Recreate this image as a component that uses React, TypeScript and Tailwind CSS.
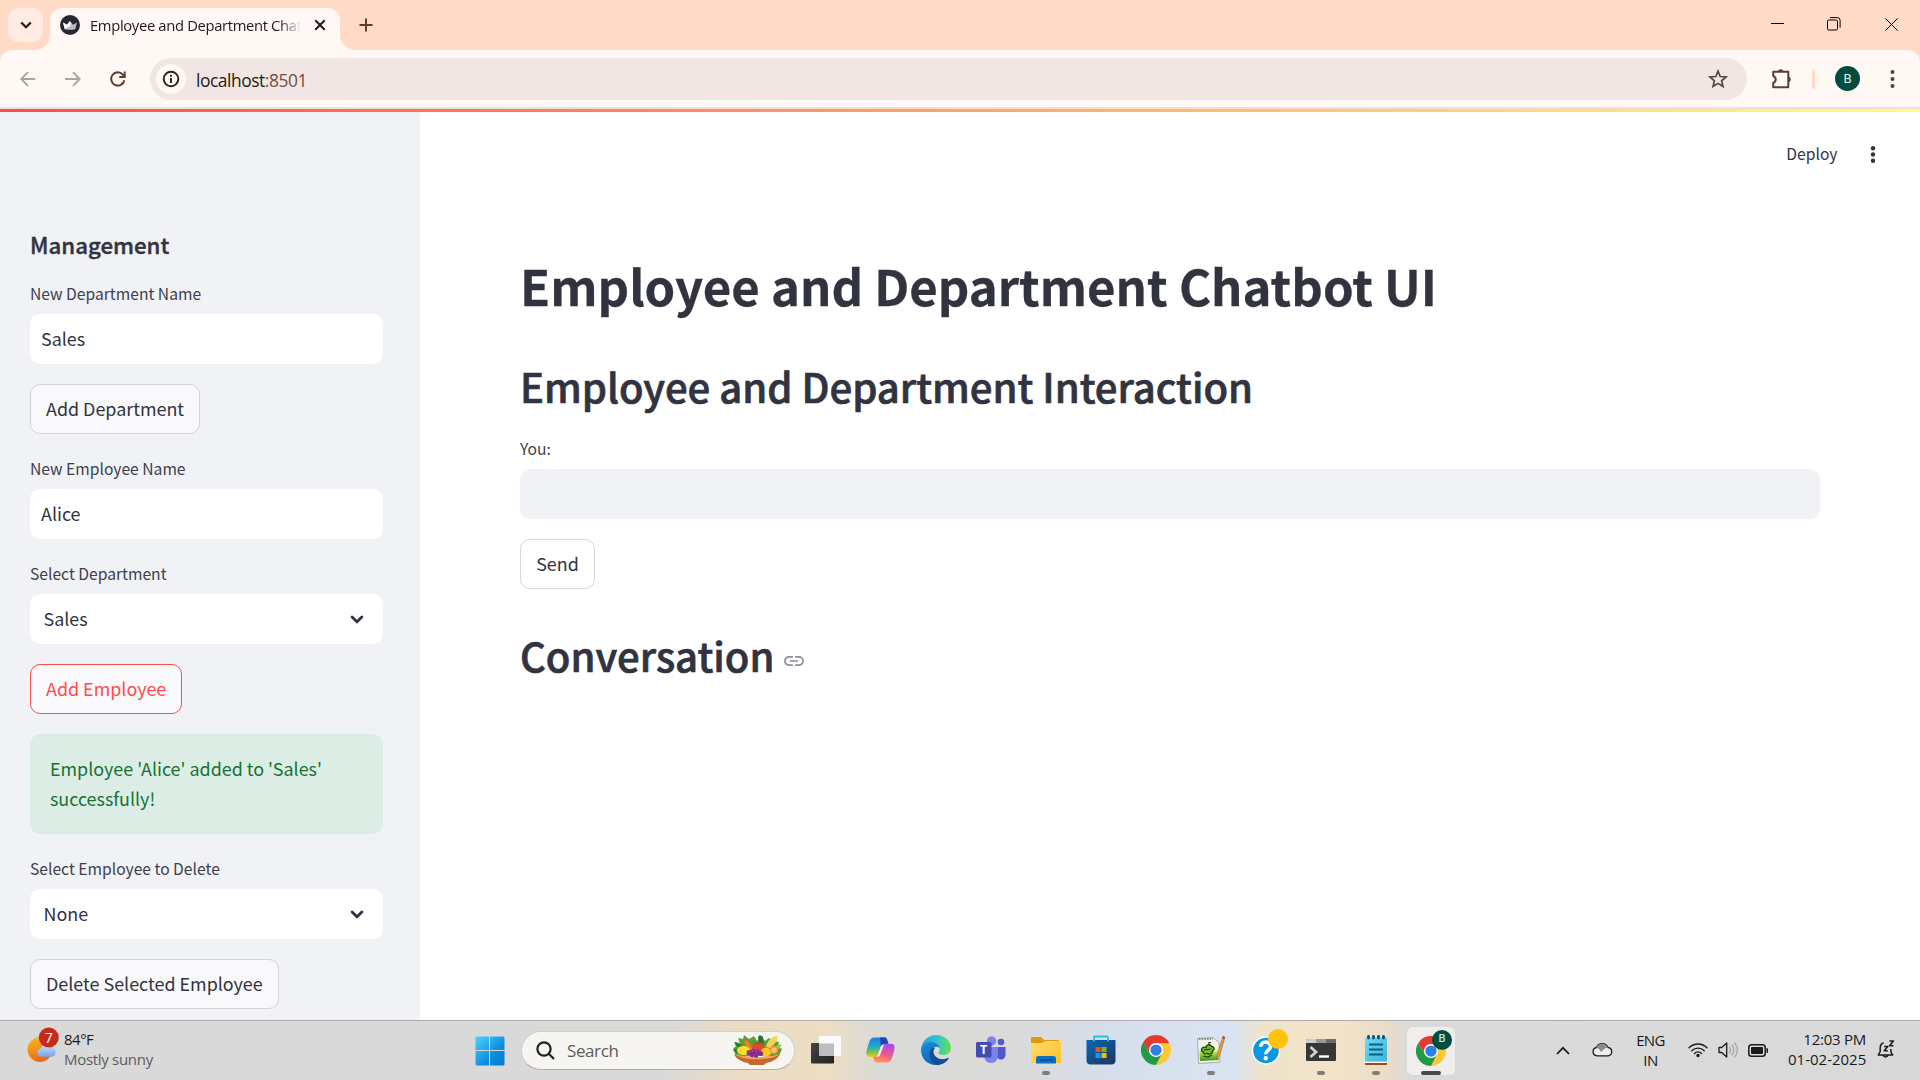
import React from "react";

const UI = "font-['Open_Sans','Noto_Sans',sans-serif]";
const APP = "font-['Noto_Sans_CJK_SC','Noto_Sans',sans-serif]";

function Crown() {
  return (
    <svg width="20" height="20" viewBox="0 0 20 20" className="shrink-0">
      <circle cx="10" cy="10" r="10" fill="#262730" />
      <path d="M3 7.500l4 2.200L10 6l3 3.700 4-2.200-1.800 6.800c-3 .7-7 .7-10.400 0z" fill="#b9bcc2" />
      <path d="M3 7.500l4 2.200L10 6l.8 4.500-6 3.800z" fill="#fff" />
    </svg>
  );
}

function TabStrip() {
  return (
    <header className="flex h-[50px] shrink-0 items-start bg-[#ffdac6] pl-2 text-[#1f1a17]">
      <div className="mt-2 flex h-[34px] w-[35px] items-center justify-center rounded-[11px] bg-[#ffebe2]">
        <svg width="12" height="8" viewBox="0 0 12 8" fill="none" stroke="#1f1a17" strokeWidth="2.2">
          <path d="M1.2 1.5L6 6.2l4.8-4.7" />
        </svg>
      </div>
      <div className="relative ml-[7px] mt-2 flex h-[42px] w-[290px] items-start rounded-t-[12px] bg-[#fff8f5] pl-[10px]">
        <svg className="absolute bottom-0 -left-[15px]" width="15" height="15">
          <path d="M15 0v15H0A15 15 0 0 0 15 0z" fill="#fff8f5" />
        </svg>
        <svg className="absolute bottom-0 -right-[15px]" width="15" height="15">
          <path d="M0 0v15h15A15 15 0 0 1 0 0z" fill="#fff8f5" />
        </svg>
        <div className="mt-[7px] flex h-5 items-center">
          <Crown />
          <div className="ml-[10px] w-[212px] overflow-hidden whitespace-nowrap text-[14.8px] leading-5 tracking-[-0.35px] [mask-image:linear-gradient(to_right,black_190px,transparent_211px)]">
            Employee and Department Chatbot
          </div>
          <svg width="12" height="12" viewBox="0 0 12 12" className="ml-3" stroke="#1f1a17" strokeWidth="2">
            <path d="M1.3 1.3l9.4 9.4M10.7 1.3L1.3 10.7" />
          </svg>
        </div>
      </div>
      <svg width="14" height="14" viewBox="0 0 14 14" className="ml-[19px] mt-[18px]" stroke="#5b3f30" strokeWidth="2">
        <path d="M7 .5v13M.5 7h13" />
      </svg>
      <div className="ml-auto flex h-[48px] items-center pr-[22px] text-black">
        <svg width="13" height="13" viewBox="0 0 13 13" stroke="#000" fill="none">
          <path d="M0 5.500h13" />
        </svg>
        <svg width="14" height="14" viewBox="0 0 14 14" stroke="#000" fill="none" className="ml-[43px]">
          <rect x=".5" y="3" width="10" height="10" rx="1.2" />
          <path d="M3 .6h7.5a2.6 2.6 0 0 1 2.6 2.6v7.5" />
        </svg>
        <svg width="13" height="13" viewBox="0 0 13 13" stroke="#000" className="ml-[44px]" fill="none">
          <path d="M.4.4l12.2 12.2M12.6.4L.4 12.6" />
        </svg>
      </div>
    </header>
  );
}

function Toolbar() {
  return (
    <div className="shrink-0 bg-[#ffdac6]">
      <div className="flex h-[57px] items-center rounded-t-[12px] bg-[#fff8f5] pl-5">
        <svg width="16" height="16" viewBox="0 0 16 16" fill="none" stroke="#b1a29d" strokeWidth="1.9">
          <path d="M15.3 8H1.5M8 1.2L1.3 8 8 14.8" />
        </svg>
        <svg width="16" height="16" viewBox="0 0 16 16" fill="none" stroke="#b1a29d" strokeWidth="1.9" className="ml-[29px]">
          <path d="M0 8h14M8 1.2L14.7 8 8 14.8" />
        </svg>
        <svg width="16" height="16" viewBox="0 0 16 16" fill="none" stroke="#5b3f30" strokeWidth="2" className="ml-[29px]">
          <path d="M14.3 9.2A6.6 6.6 0 1 1 12.8 3.6L14.6 5.6" />
          <path d="M14.7.5V6H9.2" />
        </svg>
        <div className="ml-[24px] flex h-[42px] w-[1597px] items-center rounded-full bg-[#f1e6e3] pl-[6px]">
          <div className="flex size-[30px] items-center justify-center rounded-full bg-[#fff8f5]">
            <svg width="18" height="18" viewBox="0 0 18 18" fill="none" stroke="#2b211d" strokeWidth="1.9">
              <circle cx="9" cy="9" r="7.3" />
              <path d="M9 8v5M9 4.8v2" />
            </svg>
          </div>
          <div className="ml-[10px] mt-0.5 text-[17.4px] leading-6 tracking-[-0.45px] text-[#1f1a17]">
            localhost<span className="text-[#6b4f43]">:8501</span>
          </div>
          <svg width="20" height="20" viewBox="0 0 20 20" fill="none" stroke="#55453f" strokeWidth="1.7" className="ml-auto mr-[19px]">
            <path d="M10 2.2l2.2 5.3 5.8.5-4.4 3.8 1.4 5.7-5-3.1-5 3.1 1.4-5.7L2 8l5.8-.5z" />
          </svg>
        </div>
        <svg width="22" height="22" viewBox="0 0 22 22" className="ml-[24px]">
          <path d="M2.2 3.7h15.1v15.6H2.2v-4.3a3.7 3.7 0 0 0 0-7z" fill="none" stroke="#5b3f30" strokeWidth="2" strokeLinejoin="round" />
          <path d="M7 3a2.8 2.4 0 0 1 5.400 0zM18 8.700a2.400 2.800 0 0 1 0 5.400z" fill="#5b3f30" />
        </svg>
        <div className="ml-[19px] h-5 w-[3px] rounded bg-[#ffdac6]" />
        <div className="ml-[20px] flex size-[25px] items-center justify-center rounded-full bg-[#004d40] font-['Roboto',sans-serif] text-[13px] text-[#e5f0ee]">
          B
        </div>
        <svg width="5" height="20" viewBox="0 0 5 20" fill="#5b3f30" className="ml-[30px]">
          <circle cx="2.500" cy="3" r="2" />
          <circle cx="2.500" cy="10" r="2" />
          <circle cx="2.500" cy="17" r="2" />
        </svg>
      </div>
      <div className="h-[2px] bg-[#eedfda]" />
    </div>
  );
}

function Label({ children }: { children: React.ReactNode }) {
  return <div className="mb-[6px] h-[29px] whitespace-nowrap pt-px text-[15.65px] leading-7 text-[#3d3f4b]">{children}</div>;
}

function Select({ value }: { value: string }) {
  return (
    <div className="flex h-[50px] items-center justify-between rounded-[10px] bg-white pl-[13.5px] pr-[19px] text-[17.9px]">
      <span className="-mt-0.5">{value}</span>
      <svg width="14" height="9" viewBox="0 0 14 9" fill="none" stroke="#31333f" strokeWidth="2.800" strokeLinecap="round">
        <path d="M2.100 2L7 6.700 11.900 2" />
      </svg>
    </div>
  );
}

function TextInput({ value }: { value: string }) {
  return (
    <div className="mb-5 flex h-[50px] items-center rounded-[10px] bg-white pb-0.5 pl-[11px] text-[17.9px]">{value}</div>
  );
}

function Button({ children, active }: { children: React.ReactNode; active?: boolean }) {
  return (
    <button
      className={
        "flex h-[50px] items-center justify-center self-start whitespace-nowrap rounded-[10px] border px-[15px] pb-0.5 text-[17.92px] " +
        (active ? "border-[#ff4b4b] bg-[#f9f9fb] text-[#ff4b4b]" : "border-[#d3d4d8] bg-[#f9f9fb]")
      }
    >
      {children}
    </button>
  );
}

function Sidebar() {
  return (
    <aside className="flex w-[420px] shrink-0 flex-col bg-[#f0f2f6] pl-[30px] pr-[37px] pt-[116px]">
      <h2 className="mb-[20px] h-[31px] pt-px text-[22.25px] font-medium leading-[30px] [-webkit-text-stroke:0.4px_#31333f]">
        Management
      </h2>
      <Label>New Department Name</Label>
      <TextInput value="Sales" />
      <Button>Add Department</Button>
      <div className="mt-5">
        <Label>New Employee Name</Label>
      </div>
      <TextInput value="Alice" />
      <Label>Select Department</Label>
      <Select value="Sales" />
      <div className="my-5 flex">
        <Button active>Add Employee</Button>
      </div>
      <div className="mb-5 h-[100px] rounded-[10px] bg-[#dcede6] px-5 pt-[19px] text-[17.9px] leading-[30px] text-[#177233]">
        Employee 'Alice' added to 'Sales' successfully!
      </div>
      <Label>Select Employee to Delete</Label>
      <Select value="None" />
      <div className="mt-5 flex">
        <Button>Delete Selected Employee</Button>
      </div>
    </aside>
  );
}

function Main() {
  return (
    <main className="flex flex-1 flex-col bg-white">
      <div className="flex h-[86px] shrink-0 items-center justify-end pr-[42.5px]">
        <span className="mb-0.5 text-[15.65px]">Deploy</span>
        <svg width="10" height="20" viewBox="0 0 10 20" fill="#31333f" className="ml-[30px]">
          <circle cx="5" cy="3.300" r="2.200" />
          <circle cx="5" cy="9.500" r="2.200" />
          <circle cx="5" cy="15.700" r="2.200" />
        </svg>
      </div>
      <div className="flex flex-col pl-[100px] pr-[100px] pt-[53px]">
        <h1 className="h-[67px] whitespace-nowrap text-[49.1px] font-bold leading-[68px] [-webkit-text-stroke:0.3px_#31333f]">
          Employee and Department Chatbot UI
        </h1>
        <h2 className="mt-[41px] h-[54px] whitespace-nowrap text-[40.05px] font-medium leading-[54px] [-webkit-text-stroke:0.7px_#31333f]">
          Employee and Department Interaction
        </h2>
        <div className="mt-[21px]">
          <Label>You:</Label>
        </div>
        <div className="h-[50px] rounded-[10px] bg-[#f0f2f6]" />
        <button className="mt-5 h-[50px] w-[75px] rounded-[10px] border border-[#d6d6d9] pb-0.5 text-[17.9px]">Send</button>
        <div className="mt-[39px] flex h-[54px] items-center">
          <h2 className="whitespace-nowrap text-[40.05px] font-medium leading-[54px] [-webkit-text-stroke:0.7px_#31333f]">
            Conversation
          </h2>
          <svg width="20" height="10" viewBox="0 0 20 10" fill="none" stroke="#8b8c94" strokeWidth="1.700" strokeLinecap="round" className="ml-[10px] mt-[11px]">
            <path d="M8.200.9H5a4.100 4.100 0 0 0 0 8.200h3.200M11.800.9H15a4.100 4.100 0 0 1 0 8.200h-3.200M6.500 5h7" />
          </svg>
        </div>
      </div>
    </main>
  );
}

function Weather() {
  return (
    <div className="flex w-[459px] items-start pl-[26px]">
      <svg width="36" height="38" viewBox="0 0 36 38" className="mt-[5px]">
        <defs>
          <linearGradient id="sun" x1="0" y1="0" x2="0.3" y2="1">
            <stop offset="0" stopColor="#f5bd2f" />
            <stop offset="1" stopColor="#ef6a0d" />
          </linearGradient>
          <linearGradient id="cl" x1="0" y1="0" x2="0" y2="1">
            <stop offset="0" stopColor="#c4defb" />
            <stop offset="1" stopColor="#7da3ea" />
          </linearGradient>
        </defs>
        <circle cx="14" cy="23.500" r="12.500" fill="url(#sun)" />
        <path d="M15 30.700a4 4 0 0 1-.5-7.900 6.500 6.500 0 0 1 11.500-.8 4.500 4.500 0 0 1 .5 8.700z" fill="url(#cl)" />
        <circle cx="22.800" cy="11.500" r="10" fill="#c42b1c" />
        <text x="22.800" y="16.500" textAnchor="middle" fontSize="14" fill="#fff" fontFamily="Open Sans">7</text>
      </svg>
      <div className="ml-[2px] mt-[8px] text-[15px] leading-5 tracking-[-0.3px] text-[#1a1a1a]">
        <div className="tracking-[-0.5px]">84°F</div>
        <div className="text-[#5c5c5c]">Mostly sunny</div>
      </div>
    </div>
  );
}

function Basket() {
  return (
    <svg width="50" height="32" viewBox="0 0 50 32">
      <path d="M1 15l3-3-2-4 6 1-2-5 5 1 1-4 5 4 5-3 3 5 5-4 3 4 4-3 4 3 6 1-1 5 4 2-3 7H4z" fill="#5a9f3c" />
      <path d="M1 15l6 0 3 5-6-1zM3 8l7 3-1 3-5-2z" fill="#2f7a2b" />
      <path d="M12 8c0-2 3-3 4-1l5 8-4 2z" fill="#f47b20" />
      <path d="M34 13c1-5 5-11 11-11 2 3-3 9-7 12z" fill="#f4d35a" />
      <path d="M39 14l10-4c1 3-3 6-8 7z" fill="#a8bf4b" />
      <path d="M26 3c1-2 5-2 5 1l1 7-5 1z" fill="#2f6f2a" />
      <ellipse cx="26" cy="13" rx="6.300" ry="5" fill="#dd4a34" />
      <path d="M26 8l-4 1.500 4 .8 4-.8z" fill="#3d8a30" />
      <ellipse cx="11.500" cy="16.500" rx="6.500" ry="4.600" fill="#ffdf2b" />
      <ellipse cx="34" cy="18" rx="5.500" ry="4.300" fill="#fcc91c" />
      <circle cx="42" cy="16" r="4.200" fill="#f58a1f" />
      <circle cx="42" cy="16" r="2.800" fill="#ffc27a" />
      <path d="M2 20c10 4 36 4 46 0-2 5-8 8-14 9l-2 2H18l-2-2C10 28 4 25 2 20z" fill="#c46a28" />
      <path d="M2 20c10 4 36 4 46 0-9 7-37 7-46 0z" fill="#efa65c" />
      <g fill="#8d2a8c">
        <circle cx="17" cy="18.500" r="2.500" /><circle cx="21" cy="17.500" r="2.500" /><circle cx="25" cy="18" r="2.500" /><circle cx="28.500" cy="19.500" r="2.500" />
        <circle cx="20" cy="21" r="2.300" /><circle cx="24" cy="21.500" r="2.300" />
      </g>
      <g fill="#b54bb4">
        <circle cx="16.500" cy="18" r=".9" /><circle cx="20.500" cy="17" r=".9" /><circle cx="24.500" cy="17.500" r=".9" />
      </g>
    </svg>
  );
}

function ChromeLogo() {
  return (
    <svg width="30" height="30" viewBox="0 0 48 48">
      <path d="M24 13h21.300A24 24 0 0 1 24 48l9.500-18.500z" fill="#fcc934" />
      <path d="M14.500 29.500L3.200 12A24 24 0 0 1 45.300 13H24z" fill="#e33b2e" />
      <path d="M3.200 12l11.300 17.500L24 35l9.500-5.500L24 48A24 24 0 0 1 3.200 12z" fill="#219a47" />
      <circle cx="24" cy="24" r="11.300" fill="#fff" />
      <circle cx="24" cy="24" r="9" fill="#2f7de9" />
    </svg>
  );
}

function Cell({ children, run }: { children: React.ReactNode; run?: boolean }) {
  return (
    <div className="relative flex h-[59px] w-[55px] shrink-0 items-center justify-center pb-px">
      {children}
      {run && <span className="absolute bottom-[5px] h-1 w-2 rounded-full bg-[#807d79]" />}
    </div>
  );
}

function StartLogo() {
  return (
    <svg width="30" height="30" viewBox="0 0 30 30">
      <defs>
        <linearGradient id="win" x1="0" y1="0" x2="1" y2="1">
          <stop offset="0" stopColor="#4fd3ff" />
          <stop offset=".6" stopColor="#0f8ee0" />
          <stop offset="1" stopColor="#0078d4" />
        </linearGradient>
      </defs>
      <path d="M1.500.5H14v13.500H.5V1.500zM15 .5h13.500l1 1V14H15zM.5 15H14v14.500H1.500l-1-1zM15 15h14.500v13.500l-1 1H15z" fill="url(#win)" />
    </svg>
  );
}

function AppIcons() {
  return (
    <>
      <Cell>
        <svg width="30" height="28" viewBox="0 0 30 28">
          <defs>
            <linearGradient id="tv" x1="0" y1="0" x2="1" y2="1">
              <stop offset="0" stopColor="#444" /><stop offset="1" stopColor="#222" />
            </linearGradient>
          </defs>
          <rect x="0" y="7" width="23" height="20.500" rx="1" fill="url(#tv)" />
          <rect x="8" y="0" width="22" height="20" rx="1" fill="#fafafa" />
          <path d="M8 7.500h15V20H8z" fill="#bdbdbd" />
        </svg>
      </Cell>
      <Cell>
        <svg width="29" height="26" viewBox="0 0 29 26">
          <defs>
            <linearGradient id="cp1" x1="0" y1="0" x2="0" y2="1">
              <stop offset="0" stopColor="#1a7fe0" /><stop offset=".45" stopColor="#1fa9c9" /><stop offset=".75" stopColor="#7fc24d" /><stop offset="1" stopColor="#f3c61c" />
            </linearGradient>
            <linearGradient id="cp2" x1=".6" y1="0" x2=".3" y2="1">
              <stop offset="0" stopColor="#a94cf0" /><stop offset=".5" stopColor="#ee5490" /><stop offset="1" stopColor="#ff9a52" />
            </linearGradient>
          </defs>
          <path d="M12 .5h6.500c2 0 2.500 2 3 4l.8 3H18c-2 0-3 1-3.500 3L12.500 17c-.7 2-1.500 3-3.500 3H4C0 20-.3 16.500.8 12.500L3.200 5C4.200 2 5.500.5 8.500.5z" fill="url(#cp1)" />
          <path d="M14 .5h5c1.600 0 2.200 2 2.700 4l.8 3H18c-1.500 0-2.600.6-3.200 2z" fill="#1e45b8" />
          <path d="M17 25.500h-6.500c-2 0-2.500-2-3-4L7 19.800h2.500c2 0 3-1 3.500-3l2.500-7c.7-2 1.500-3.100 3.500-3.100h6c4 0 4 3.500 3 7.500l-2.200 7c-1 3-2.300 4.300-5.300 4.300z" fill="url(#cp2)" />
          <path d="M14.700 10c.5-1.800 1.500-2.600 3.300-2.600L14.500 17c-.6 1.900-1.500 2.800-3.500 2.800z" fill="#ecebec" />
        </svg>
      </Cell>
      <Cell>
        <svg width="30" height="30" viewBox="0 0 30 30">
          <defs>
            <linearGradient id="ed1" x1="0" y1=".4" x2="1" y2=".5">
              <stop offset="0" stopColor="#2a9fe0" /><stop offset=".5" stopColor="#32c2cf" /><stop offset="1" stopColor="#66e04f" />
            </linearGradient>
            <linearGradient id="ed2" x1="0" y1="0" x2=".6" y2="1">
              <stop offset="0" stopColor="#1b8fdc" /><stop offset="1" stopColor="#0b5fb5" />
            </linearGradient>
          </defs>
          <path d="M.4 13.500C1 5.500 7.500 0 15 0c8.500 0 15 6 15 13 0 4.500-3.500 7-7.500 7-3 0-5-1-5-2 0-.6 1.200-1.500 1.200-4 0-3-3.200-6-8.200-6C5 8 2 10.500.4 13.500z" fill="url(#ed1)" />
          <path d="M0 15c0-4.500 4.500-8 10-8 5 0 8.700 3 8.700 6.500-1.200-2-4-2.300-5.700-.5-3.500 4-.5 12 6 13 3 .5 5-.6 7-1.500-2.500 3.500-6.500 5.500-11 5.500C6.500 30 0 23.500 0 15z" fill="url(#ed2)" />
          <path d="M10.500 13.500C6 21 11 29 16 30c5-.2 9-2.500 11.500-6 .6-.9-.3-1.500-1-1-1.500.8-3.500 1.200-5 1.200-4.500 0-9-3.200-9-7.200 0-1.700.6-3 1.500-4-1.300 0-2.600 0-3.500.5z" fill="#124f94" />
        </svg>
      </Cell>
      <Cell>
        <svg width="30" height="28" viewBox="0 0 30 28">
          <circle cx="15.500" cy="5" r="4.700" fill="#7b83eb" />
          <circle cx="25" cy="6" r="3.300" fill="#5059c9" />
          <path d="M20 11h9.500v7.500c0 3-2 5-4.500 5s-5-1.500-5-5z" fill="#5059c9" />
          <path d="M8 11h14v8c0 5-3 8-7 8s-7-3-7-8z" fill="#7b83eb" />
          <rect x="0" y="6" width="15.500" height="15.500" rx="1.400" fill="#454bb0" />
          <text x="7.700" y="18.200" textAnchor="middle" fontSize="12.500" fontWeight="700" fill="#fff" fontFamily="Open Sans">T</text>
        </svg>
      </Cell>
      <Cell run>
        <svg width="30" height="27" viewBox="0 0 30 27">
          <defs>
            <linearGradient id="fo" x1="0" y1="0" x2="1" y2="1">
              <stop offset="0" stopColor="#ffdd6e" /><stop offset="1" stopColor="#fcbf25" />
            </linearGradient>
          </defs>
          <path d="M0 1.500C0 .5.500 0 1.500 0H10l3 3h15v6H0z" fill="#dc9b0a" />
          <path d="M0 6h11l3-2h14.500c1 0 1.500.5 1.500 1.500V26H0z" fill="url(#fo)" />
          <path d="M5 26.500v-5c0-1.500 1-2.500 2.500-2.500h15c1.500 0 2.500 1 2.500 2.500v5z" fill="#0a70c4" />
          <path d="M9 23h12.500" stroke="#06457f" strokeWidth="1.200" />
        </svg>
      </Cell>
      <Cell>
        <svg width="30" height="30" viewBox="0 0 30 30">
          <defs>
            <linearGradient id="st" x1="0" y1="0" x2="1" y2="1">
              <stop offset="0" stopColor="#0a67b5" /><stop offset="1" stopColor="#23325c" />
            </linearGradient>
          </defs>
          <path d="M8 7V2.500c0-.6.400-1 1-1h12c.6 0 1 .4 1 1V7" stroke="#25bdf0" strokeWidth="1.800" fill="none" />
          <path d="M.5 5h29v20.500c0 2.500-1.500 4-4 4h-21c-2.500 0-4-1.500-4-4z" fill="url(#st)" />
          <path d="M8 5v1.500M22 5v1.500" stroke="#25bdf0" strokeWidth="1.800" />
          <rect x="9.500" y="12" width="5" height="5" fill="#f25022" /><rect x="15.500" y="12" width="5" height="5" fill="#7fba00" />
          <rect x="9.500" y="18" width="5" height="5" fill="#00a4ef" /><rect x="15.500" y="18" width="5" height="5" fill="#ffb900" />
        </svg>
      </Cell>
      <Cell><ChromeLogo /></Cell>
      <Cell run>
        <svg width="30" height="30" viewBox="0 0 30 30">
          <defs>
            <linearGradient id="np" x1="0" y1="0" x2="0" y2="1">
              <stop offset="0" stopColor="#f7f7f4" /><stop offset=".3" stopColor="#e4f2c4" /><stop offset=".55" stopColor="#a2d83c" /><stop offset="1" stopColor="#3f8f1a" />
            </linearGradient>
          </defs>
          <path d="M1.500 3.500L17 2.500l6 5L24 27l-21.500 1.500z" fill="#f1f1ee" stroke="#9b9b97" strokeWidth=".8" />
          <path d="M3 11l19-1 .7 15L4 26z" fill="url(#np)" />
          <path d="M3 4h14" stroke="#6a6a6a" strokeWidth="1.500" strokeDasharray="1.500 1.200" />
          <path d="M5.500 15c0-2.500 3-3.500 4.500-2.500C10 9.500 14.500 8.700 15.500 11.500c3 0 3.500 3.500 1 4.500.8 2.500-3.500 4-5 2.500-2.500 1-5 0-4.500-1.700-1 0-1.500-.8-1.500-1.800z" fill="#6fbd2c" stroke="#24400f" strokeWidth="1.300" />
          <path d="M8 15l7-1M7 21l5 1 4-2M13 10V7.500h2" stroke="#24400f" strokeWidth="1.200" fill="none" />
          <path d="M27 1.500l1.800 1L23.500 21l-2.700 3 .2-4z" fill="#f4a62a" stroke="#8a5a20" strokeWidth=".6" />
          <path d="M26.800.8l2.400 1.200-.7 2.600-2.400-1z" fill="#b5573c" />
        </svg>
      </Cell>
      <Cell>
        <span className="relative flex">
          <svg width="30" height="30" viewBox="0 0 30 30">
            <circle cx="15" cy="15.500" r="14.200" fill="#fff" />
            <circle cx="15" cy="15.500" r="12.800" fill="#0e97dc" />
            <path d="M9.700 11.800c0-6.300 10-6.300 9.800-.3-.1 3.700-4.800 3.600-4.700 7.700" fill="none" stroke="#fff" strokeWidth="3.600" />
            <circle cx="14.800" cy="23.300" r="2.200" fill="#fff" />
          </svg>
          <span className="absolute -right-[7px] -top-[6px] size-5 rounded-full bg-[#ffc20d]" />
        </span>
      </Cell>
      <Cell run>
        <svg width="30" height="22" viewBox="0 0 30 22">
          <rect width="30" height="22" rx="1.200" fill="#363636" />
          <path d="M0 1.200C0 .5.500 0 1.200 0H10v4H0z" fill="#cdcdcd" /><path d="M10 0h10v4H10z" fill="#999" /><path d="M20 0h8.800c.7 0 1.200.5 1.200 1.200V4H20z" fill="#6b6b6b" />
          <path d="M4.500 8l5.500 5-5.500 5" stroke="#d0d0d0" strokeWidth="2.800" fill="none" />
          <path d="M13 17.500h10" stroke="#fff" strokeWidth="2.400" />
        </svg>
      </Cell>
      <Cell run>
        <svg width="24" height="30" viewBox="0 0 24 30">
          <defs>
            <linearGradient id="no" x1="0" y1="0" x2="1" y2="1">
              <stop offset="0" stopColor="#6fdcf5" /><stop offset="1" stopColor="#3fb2d8" />
            </linearGradient>
          </defs>
          <path d="M1 26h22v3c0 .6-.4 1-1 1H2c-.6 0-1-.4-1-1z" fill="#9a4a0c" />
          <path d="M1 25.500h22V28H1z" fill="#f3f3f3" />
          <rect x="1" y="2.500" width="22" height="24" rx="1" fill="url(#no)" />
          <path d="M5 9.500h14M5 14.500h14M5 19.500h14" stroke="#0a5f87" strokeWidth="1.800" />
          <path d="M4.500 1.500v1.500M9.500 1.500v1.500M14.500 1.500v1.500M19.500 1.500v1.500" stroke="#0b5275" strokeWidth="2.800" strokeLinecap="round" />
        </svg>
      </Cell>
      <div className="relative ml-[4px] flex size-12 shrink-0 items-center justify-center self-center rounded-md bg-[#efeeed]">
        <ChromeLogo />
        <span className="absolute right-[3px] top-[3px] flex size-5 items-center justify-center rounded-full bg-[#004d40] font-['Roboto',sans-serif] text-[11px] font-medium text-[#cfe3df]">B</span>
        <span className="absolute bottom-0 h-1 w-5 rounded-full bg-[#4c4845]" />
      </div>
    </>
  );
}

function Tray() {
  return (
    <div className="ml-auto flex items-center pr-[25px] text-[15px] leading-5 text-[#1a1a1a]">
      <svg width="14" height="9" viewBox="0 0 14 9" fill="none" stroke="#1a1a1a" strokeWidth="1.700">
        <path d="M1 8l6-6.200L13 8" />
      </svg>
      <svg width="21" height="15" viewBox="0 0 21 15" className="-mt-0.5 ml-[22px]">
        <path d="M5 13.800a4.200 4.200 0 0 1-.6-8.300A6.300 6.300 0 0 1 16 5.500a4.200 4.200 0 0 1 .3 8.300z" fill="#eee" stroke="#1a1a1a" strokeWidth="1.300" />
        <path d="M4.400 5.500A6.300 6.300 0 0 1 16 5.500c-3 0-5 3-7 4.500C8 8 6.500 6 4.400 5.500z" fill="#8d8d8d" />
      </svg>
      <div className="-mt-0.5 ml-[23px] w-[29px] text-center tracking-[-0.6px]">
        <div>ENG</div>
        <div>IN</div>
      </div>
      <svg width="20" height="16" viewBox="0 0 20 16" fill="none" stroke="#1a1a1a" strokeWidth="1.400" className="-mt-0.5 ml-[23px]" strokeLinecap="round">
        <path d="M1 5.800a12.700 12.700 0 0 1 18 0M3.800 8.700a8.800 8.800 0 0 1 12.400 0M6.500 11.500a5 5 0 0 1 7 0" />
        <circle cx="10" cy="13.500" r="1.700" fill="#1a1a1a" stroke="none" />
      </svg>
      <svg width="20" height="16" viewBox="0 0 20 16" fill="none" strokeWidth="1.300" className="-mt-px ml-[10px]" strokeLinecap="round">
        <path d="M1 5.500h2.700L8.700 1v14l-5-4.500H1z" stroke="#1a1a1a" strokeLinejoin="round" />
        <path d="M11.500 5.500a3.700 3.700 0 0 1 0 5M14 3.200a7 7 0 0 1 0 9.600M16.500 1a10 10 0 0 1 0 14" stroke="#a6a6a6" />
      </svg>
      <svg width="21" height="13" viewBox="0 0 21 13" className="-mt-px ml-[10px]">
        <rect x=".8" y=".8" width="16.400" height="11.400" rx="2.800" fill="none" stroke="#1a1a1a" strokeWidth="1.500" />
        <rect x="3" y="3" width="12" height="7" rx="1" fill="#1a1a1a" />
        <path d="M18.500 4c1 0 1.500.6 1.500 1.300v2.400c0 .7-.5 1.300-1.500 1.300z" fill="#1a1a1a" />
      </svg>
      <div className="-mt-[3px] ml-[19px] w-[78px] whitespace-nowrap text-right">
        <div className="tracking-[-0.25px]">12:03 PM</div>
        <div>01-02-2025</div>
      </div>
      <svg width="18" height="19" viewBox="0 0 18 19" fill="none" stroke="#1a1a1a" strokeWidth="1.500" className="-mt-0.5 ml-[11px]" strokeLinejoin="round">
        <path d="M6.500 2.800C4.400 3.600 3.200 5.500 3.200 8v3.500L1.300 15h14.400l-1.800-3.200V9M6 15.300a2.700 2.700 0 0 0 5 0" />
        <path d="M7.200 6.500h3.600l-3.600 4.300h3.600M12.500 1h4l-4 4.700h4" />
      </svg>
    </div>
  );
}

function Taskbar() {
  return (
    <footer className="flex h-[60px] shrink-0 border-t border-[#ababae] bg-[linear-gradient(to_right,#d9d9d9_0px,#d9d9d9_660px,#eadbc6_730px,#ecddc3_830px,#dadad8_880px,#dadada_1020px,#d6deeb_1110px,#d9e4f2_1235px,#efe3cb_1262px,#f2e4c8_1340px,#eaddc8_1385px,#dadada_1410px,#d9d9d9_1920px)]">
      <Weather />
      <div className="flex w-[62px] items-center pl-[15.5px]">
        <StartLogo />
      </div>
      <div className="mr-[3px] mt-[10px] flex h-[39px] w-[274px] items-center rounded-full border border-x-[#d2cec8] border-b-[#b5aea4] border-t-[#d2cec8] bg-[#f7f5f2] pl-[14px] pr-[12px]">
        <svg width="19" height="19" viewBox="0 0 19 19" fill="none" stroke="#222" strokeWidth="2.200">
          <circle cx="8" cy="8" r="6.600" />
          <path d="M12.800 12.800l5.200 5.200" />
        </svg>
        <span className="ml-[12px] mt-px text-[17px] tracking-[-0.4px] text-[#5d5b59]">Search</span>
        <span className="-mt-0.5 ml-auto">
          <Basket />
        </span>
      </div>
      <AppIcons />
      <Tray />
    </footer>
  );
}

export default function App() {
  return (
    <div className={"flex h-[1080px] w-[1920px] flex-col overflow-hidden " + UI}>
      <TabStrip />
      <Toolbar />
      <div className="h-[3px] shrink-0 bg-[linear-gradient(to_right,#ff4b4b,#fffd80)]" />
      <div className={"flex min-h-0 flex-1 text-[#31333f] " + APP}>
        <Sidebar />
        <Main />
      </div>
      <Taskbar />
    </div>
  );
}
